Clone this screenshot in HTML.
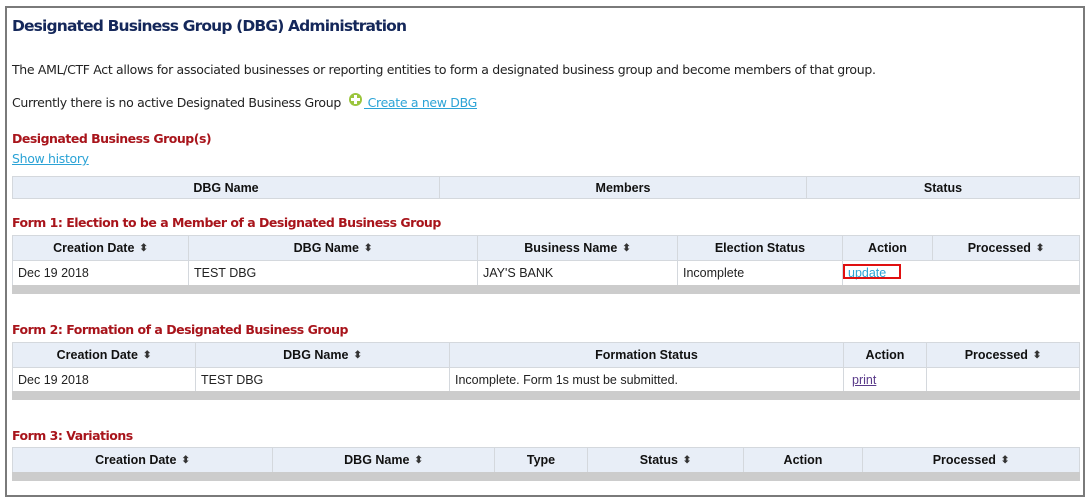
<!DOCTYPE html><html><head><meta charset="utf-8"><style>
*{margin:0;padding:0;box-sizing:border-box}
body{width:1090px;height:498px;background:#fff;position:relative;overflow:hidden;font-family:"DejaVu Sans",sans-serif}
.frame{position:absolute;left:5px;top:6px;width:1080px;height:491px;border:2px solid #7a7a7a}
.a{position:absolute;white-space:nowrap}
.t{font-size:12.5px;color:#222;letter-spacing:-0.33px}
h1{position:absolute;left:12px;top:17px;font-size:15.5px;color:#14275a;font-weight:bold;white-space:nowrap;letter-spacing:-0.85px}
.red{font-size:12.5px;font-weight:bold;color:#a8141b;letter-spacing:-0.5px}
.lnk{color:#2ba3d6;text-decoration:underline}
.c{position:absolute;font-family:"Liberation Sans",Arial,sans-serif;font-size:12.5px;color:#222;display:flex;align-items:center;border:1px solid #d4d8dd}
.h{background:#e8eef7;font-weight:bold;justify-content:center;color:#111}
.d{background:#fff;padding-left:5px}
.g{position:absolute;background:#cccccc}
.s{font-size:10px;margin-left:5px;color:#333}
</style></head><body>
<div class="frame"></div>
<h1>Designated Business Group (DBG) Administration</h1>
<div class="a t" style="left:12px;top:62px">The AML/CTF Act allows for associated businesses or reporting entities to form a designated business group and become members of that group.</div>
<div class="a t" style="left:12px;top:95px">Currently there is no active Designated Business Group</div>
<div class="a" style="left:349px;top:93px;width:13px;height:13px;border-radius:50%;background:#9bc53d"><div style="position:absolute;left:5px;top:2px;width:3px;height:9px;background:#fff"></div><div style="position:absolute;left:2px;top:5px;width:9px;height:3px;background:#fff"></div></div>
<div class="a t lnk" style="left:364px;top:95px">&nbsp;Create a new DBG</div>
<div class="a red" style="left:12px;top:131px">Designated Business Group(s)</div>
<div class="a t lnk" style="left:12px;top:151px">Show history</div>

<div class="c h" style="left:12px;top:176px;width:428px;height:23px">DBG Name</div>
<div class="c h" style="left:439px;top:176px;width:368px;height:23px">Members</div>
<div class="c h" style="left:806px;top:176px;width:274px;height:23px">Status</div>

<div class="a red" style="left:12px;top:215px">Form 1: Election to be a Member of a Designated Business Group</div>
<div class="c h" style="left:12px;top:235px;width:177px;height:26px">Creation Date<span class="s">⬍</span></div>
<div class="c h" style="left:188px;top:235px;width:290px;height:26px">DBG Name<span class="s">⬍</span></div>
<div class="c h" style="left:477px;top:235px;width:201px;height:26px">Business Name<span class="s">⬍</span></div>
<div class="c h" style="left:677px;top:235px;width:166px;height:26px">Election Status</div>
<div class="c h" style="left:842px;top:235px;width:91px;height:26px">Action</div>
<div class="c h" style="left:932px;top:235px;width:148px;height:26px">Processed<span class="s">⬍</span></div>
<div class="c d" style="left:12px;top:260px;width:177px;height:26px">Dec 19 2018</div>
<div class="c d" style="left:188px;top:260px;width:290px;height:26px">TEST DBG</div>
<div class="c d" style="left:477px;top:260px;width:201px;height:26px">JAY'S BANK</div>
<div class="c d" style="left:677px;top:260px;width:166px;height:26px">Incomplete</div>
<div class="c d" style="left:842px;top:260px;width:91px;height:26px;border-right:none"><span style="color:#2ba3d6;text-decoration:underline">update</span></div>
<div class="c d" style="left:932px;top:260px;width:148px;height:26px;border-left:none"></div>
<div class="a" style="left:843px;top:264px;width:58px;height:15px;border:2px solid #e01010"></div>
<div class="g" style="left:12px;top:285px;width:1068px;height:9px"></div>

<div class="a red" style="left:12px;top:322px">Form 2: Formation of a Designated Business Group</div>
<div class="c h" style="left:12px;top:342px;width:184px;height:26px">Creation Date<span class="s">⬍</span></div>
<div class="c h" style="left:195px;top:342px;width:255px;height:26px">DBG Name<span class="s">⬍</span></div>
<div class="c h" style="left:449px;top:342px;width:395px;height:26px">Formation Status</div>
<div class="c h" style="left:843px;top:342px;width:84px;height:26px">Action</div>
<div class="c h" style="left:926px;top:342px;width:154px;height:26px">Processed<span class="s">⬍</span></div>
<div class="c d" style="left:12px;top:367px;width:184px;height:25px">Dec 19 2018</div>
<div class="c d" style="left:195px;top:367px;width:255px;height:25px">TEST DBG</div>
<div class="c d" style="left:449px;top:367px;width:395px;height:25px">Incomplete. Form 1s must be submitted.</div>
<div class="c d" style="left:843px;top:367px;width:84px;height:25px;padding-left:8px"><span style="color:#5a3a8a;text-decoration:underline">print</span></div>
<div class="c d" style="left:926px;top:367px;width:154px;height:25px"></div>
<div class="g" style="left:12px;top:391px;width:1068px;height:9px"></div>

<div class="a red" style="left:12px;top:428px">Form 3: Variations</div>
<div class="c h" style="left:12px;top:447px;width:261px;height:26px">Creation Date<span class="s">⬍</span></div>
<div class="c h" style="left:272px;top:447px;width:223px;height:26px">DBG Name<span class="s">⬍</span></div>
<div class="c h" style="left:494px;top:447px;width:94px;height:26px">Type</div>
<div class="c h" style="left:587px;top:447px;width:157px;height:26px">Status<span class="s">⬍</span></div>
<div class="c h" style="left:743px;top:447px;width:120px;height:26px">Action</div>
<div class="c h" style="left:862px;top:447px;width:218px;height:26px">Processed<span class="s">⬍</span></div>
<div class="g" style="left:12px;top:472px;width:1068px;height:9px"></div>
</body></html>
